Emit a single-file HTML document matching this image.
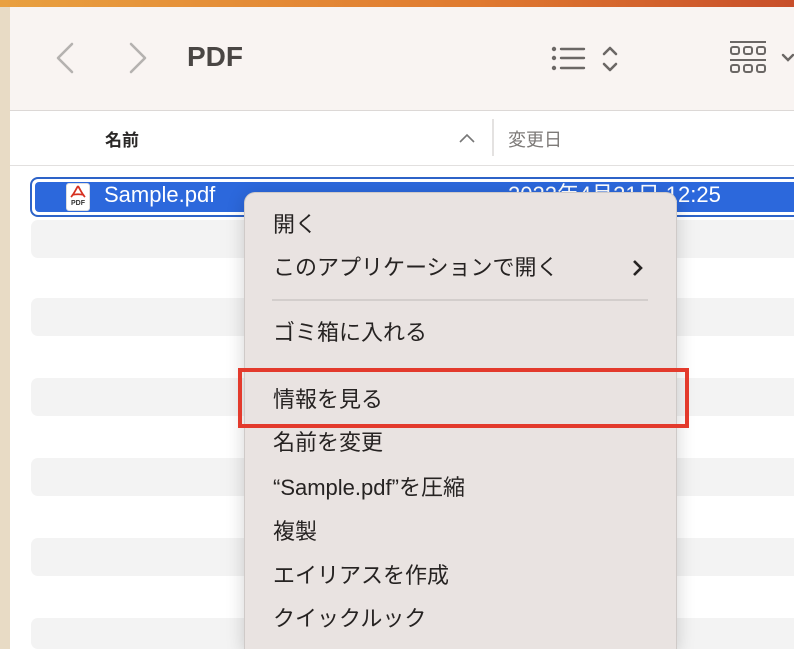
<!DOCTYPE html>
<html><head><meta charset="utf-8"><style>
*{margin:0;padding:0;box-sizing:border-box}
html,body{width:794px;height:649px;overflow:hidden}
body{position:relative;background:#fff;font-family:"Liberation Sans","Noto Sans CJK JP",sans-serif}
.a{position:absolute}
.stripe{position:absolute;left:31px;width:763px;height:38px;background:#f3f3f3;border-radius:7px 0 0 7px}
.mi{position:absolute;left:273px;font-size:22px;color:#262322;line-height:26px;white-space:nowrap}
</style></head><body>
<div class="a" style="left:0;top:0;width:794px;height:7px;background:linear-gradient(90deg,#e9a040,#e07a30 60%,#c84e2a)"></div>
<div class="a" style="left:0;top:7px;width:10px;height:642px;background:#e8dbc5"></div>
<div class="a" style="left:10px;top:7px;width:784px;height:104px;background:#f9f4f2;border-bottom:1px solid #dcd8d6"></div>
<svg class="a" style="left:50px;top:40px" width="110" height="36" viewBox="0 0 110 36"><path d="M22 4 L8 18 L22 32" fill="none" stroke="#b5b2b0" stroke-width="2.6" stroke-linecap="round" stroke-linejoin="round"/><path d="M81 4 L95 18 L81 32" fill="none" stroke="#b5b2b0" stroke-width="2.6" stroke-linecap="round" stroke-linejoin="round"/></svg>
<div class="a" style="left:187px;top:41px;font-size:28px;font-weight:bold;color:#4a4644">PDF</div>
<svg class="a" style="left:548px;top:44px" width="75" height="30" viewBox="0 0 75 30"><g fill="#6b6765"><circle cx="6" cy="5" r="2.2"/><circle cx="6" cy="14" r="2.2"/><circle cx="6" cy="24" r="2.2"/></g><g stroke="#6b6765" stroke-width="2.4" stroke-linecap="round"><path d="M13 5H36M13 14H36M13 24H36"/></g><path d="M56 10L62 4L68 10M56 20L62 26L68 20" fill="none" stroke="#6b6765" stroke-width="2.6" stroke-linecap="round" stroke-linejoin="round"/></svg>
<svg class="a" style="left:728px;top:40px" width="66" height="36" viewBox="0 0 66 36"><g stroke="#6b6765" stroke-width="2" fill="none"><path d="M2 2H38M2 20H38"/><rect x="3" y="7" width="8" height="7" rx="2"/><rect x="16" y="7" width="8" height="7" rx="2"/><rect x="29" y="7" width="8" height="7" rx="2"/><rect x="3" y="25" width="8" height="7" rx="2"/><rect x="16" y="25" width="8" height="7" rx="2"/><rect x="29" y="25" width="8" height="7" rx="2"/></g><path d="M55 15L60 20L65 15" fill="none" stroke="#6b6765" stroke-width="2.4" stroke-linecap="round"/></svg>
<div class="a" style="left:10px;top:165px;width:784px;height:1px;background:#e2e0df"></div>
<div class="a" style="left:105px;top:126px;font-size:17px;font-weight:bold;color:#2a2827">名前</div>
<svg class="a" style="left:458px;top:132px" width="18" height="12"><path d="M2 10L9 3L16 10" fill="none" stroke="#777" stroke-width="1.6"/></svg>
<div class="a" style="left:492px;top:119px;width:2px;height:37px;background:#e4e2e1"></div>
<div class="a" style="left:508px;top:126px;font-size:18px;color:#7d7a78">変更日</div>
<div class="a" style="left:30px;top:177px;width:764px;height:40px;border:2px solid #2d63c8;border-right:none;border-radius:8px 0 0 8px;background:#fff"></div>
<div class="a" style="left:35px;top:182px;width:759px;height:30px;background:#2c68dc;border-radius:4px 0 0 4px"></div>
<div class="a" style="left:66px;top:183px;width:24px;height:28px;background:#fff;border-radius:3px;border:1px solid #ddd"></div>
<svg class="a" style="left:68px;top:185px" width="20" height="14"><path d="M10 1C8 4 6 9 3 12M10 1C12 4 14 9 17 12M4 10C8 9 12 9 16 10" fill="none" stroke="#d63020" stroke-width="1.8"/></svg>
<div class="a" style="left:71px;top:200px;font-size:7px;font-weight:bold;color:#333">PDF</div>
<div class="a" style="left:104px;top:182px;font-size:22px;color:#fff;line-height:26px">Sample.pdf</div>
<div class="a" style="left:508px;top:182px;font-size:22px;color:#fff;line-height:26px;white-space:nowrap">2022年4月21日 12:25</div>
<div class="stripe" style="top:220px"></div>
<div class="stripe" style="top:298px"></div>
<div class="stripe" style="top:378px"></div>
<div class="stripe" style="top:458px"></div>
<div class="stripe" style="top:538px"></div>
<div class="stripe" style="top:618px;height:31px"></div>
<div class="a" style="left:244px;top:192px;width:433px;height:457px;background:#e9e3e1;border-radius:11px 11px 0 0;border:1px solid #cfcac8;border-bottom:none;box-shadow:0 4px 18px rgba(0,0,0,.18)"></div>
<div class="mi" style="top:212px">開く</div>
<div class="mi" style="top:255px">このアプリケーションで開く</div>
<svg class="a" style="left:631px;top:259px" width="14" height="18"><path d="M3 2L10 9L3 16" fill="none" stroke="#262322" stroke-width="2.6"/></svg>
<div class="a" style="left:272px;top:299px;width:376px;height:2px;background:#d3cecc"></div>
<div class="mi" style="top:320px">ゴミ箱に入れる</div>
<div class="a" style="left:238px;top:368px;width:451px;height:60px;border:4px solid #e33a2c"></div>
<div class="mi" style="top:387px">情報を見る</div>
<div class="mi" style="top:430px">名前を変更</div>
<div class="mi" style="top:475px">“Sample.pdf”を圧縮</div>
<div class="mi" style="top:519px">複製</div>
<div class="mi" style="top:563px">エイリアスを作成</div>
<div class="mi" style="top:606px">クイックルック</div>
</body></html>
